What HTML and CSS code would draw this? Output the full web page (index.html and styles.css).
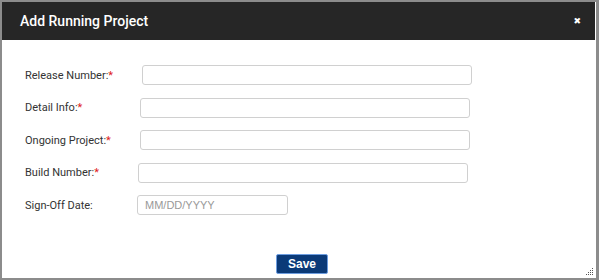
FILE: index.html
```html
<!DOCTYPE html>
<html lang="en">
  <head>
    <meta charset="UTF-8" />
    <title>Add Running Project</title>
    <link rel="stylesheet" href="styles.css">
  </head>
  <body>
    <div class="dialog">
      <!-- header -->
      <div class="dialog-header">
        <span class="dialog-title">Add Running Project</span>
        <span class="dialog-close">&#10006;</span>
      </div>

      <form class="dialog-body">
        <div class="field-row">
          <label class="field-label">Release Number:<span class="req">*</span></label>
          <input class="field-input shift-r2" type="text" />
        </div>
        <div class="field-row">
          <label class="field-label">Detail Info:<span class="req">*</span></label>
          <input class="field-input" type="text" />
        </div>
        <div class="field-row">
          <label class="field-label">Ongoing Project:<span class="req">*</span></label>
          <input class="field-input" type="text" />
        </div>
        <div class="field-row">
          <label class="field-label">Build Number:<span class="req">*</span></label>
          <input class="field-input shift-l2" type="text" />
        </div>
        <div class="field-row">
          <label class="field-label">Sign-Off Date:</label>
          <input class="field-input field-date shift-l3" type="text" placeholder="MM/DD/YYYY" />
        </div>

        <div class="dialog-actions">
          <button class="save-button" type="button">Save</button>
        </div>
      </form>

      <!-- resize grip -->
      <svg class="grip" width="8" height="8" viewBox="0 0 8 8">
        <rect x="6" y="0" width="1" height="1" fill="#555" />
        <rect x="4" y="2" width="1" height="1" fill="#555" />
        <rect x="6" y="2" width="1" height="1" fill="#555" />
        <rect x="2" y="4" width="1" height="1" fill="#555" />
        <rect x="4" y="4" width="1" height="1" fill="#555" />
        <rect x="6" y="4" width="1" height="1" fill="#555" />
        <rect x="0" y="6" width="1" height="1" fill="#555" />
        <rect x="2" y="6" width="1" height="1" fill="#555" />
        <rect x="4" y="6" width="1" height="1" fill="#555" />
        <rect x="6" y="6" width="1" height="1" fill="#555" />
      </svg>
    </div>
  </body>
</html>
```

FILE: styles.css
```css
body {
  margin: 0;
  font-family: Roboto, "Liberation Sans", Arial, sans-serif;
  background-color: #fff;
  color: #333;
}
.dialog {
  position: relative;
  width: 599px;
  height: 280px;
  box-sizing: border-box;
  border: 2px solid #8c8c8c;
  border-right-width: 3px;
  background-color: #fff;
}
.dialog-header {
  display: flex;
  align-items: center;
  justify-content: space-between;
  height: 38px;
  background-color: #262626;
  padding: 0 14px 0 18px;
  margin-right: 1px;
}
.dialog-title {
  color: #fff;
  font-size: 14px;
  font-weight: 500;
}
.dialog-close {
  color: #fff;
  font-size: 9px;
  font-family: "DejaVu Sans", sans-serif;
  font-weight: bold;
}
.dialog-body {
  padding: 25px 0 0 23px;
}
.field-row {
  display: flex;
  align-items: center;
  height: 20px;
  margin-bottom: 12.5px;
}
.field-label {
  width: 115px;
  font-size: 11px;
  color: #333;
}
.req {
  color: #e02020;
}
.field-input {
  width: 330px;
  height: 20px;
  box-sizing: border-box;
  border: 1px solid #d0d0d0;
  border-radius: 3px;
  padding: 0 7px;
  font-family: "Liberation Sans", Arial, sans-serif;
  font-size: 11px;
  background-color: #fff;
}
.field-date {
  width: 151px;
}
.field-input::placeholder {
  color: #999;
}
.shift-r2 { margin-left: 2px; }
.shift-l2 { margin-left: -2px; }
.shift-l3 { margin-left: -3px; }

.dialog-actions {
  display: flex;
  justify-content: center;
  padding-top: 26px;
  padding-right: 23px;
}
.save-button {
  width: 52px;
  height: 20px;
  margin-left: 6px;
  background-color: #0b3a78;
  color: #fff;
  border: 1px solid #6d9de0;
  border-radius: 2px;
  font-family: "Liberation Sans", Arial, sans-serif;
  font-size: 12px;
  font-weight: bold;
  padding: 0;
}
.grip {
  position: absolute;
  right: 2px;
  bottom: 2px;
}
```
